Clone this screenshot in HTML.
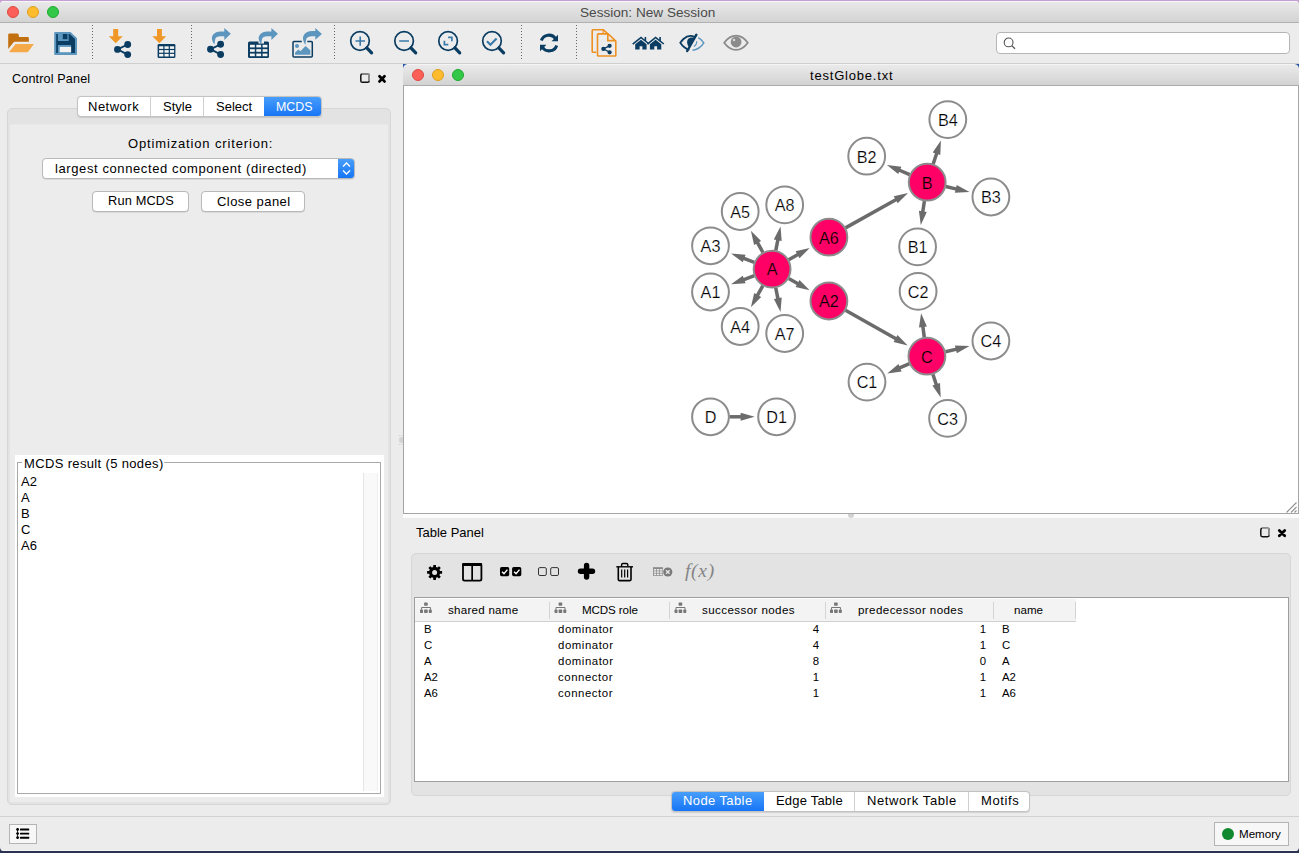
<!DOCTYPE html>
<html><head><meta charset="utf-8">
<style>
*{box-sizing:border-box;margin:0;padding:0}
html,body{width:1299px;height:853px;overflow:hidden;background:linear-gradient(#c59fd3 0,#c59fd3 20px,#2a3352 20px);font-family:"Liberation Sans",sans-serif;color:#000}
.a{position:absolute}
.t{position:absolute;white-space:pre;line-height:1}
#win{position:absolute;left:0;top:1px;width:1299px;height:850px;background:#ececec;border-radius:4px 4px 4px 4px;overflow:hidden}
#inner{position:absolute;left:0;top:-1px;width:1299px;height:853px}
#titlebar{left:0;top:0;width:1299px;height:23px;background:linear-gradient(#ebebeb,#d3d3d3);border-bottom:1px solid #b1b1b1}
.light{position:absolute;width:12px;height:12px;border-radius:50%}
.red{background:#fc5f57;border:0.5px solid #de4a41}
.yel{background:#fdbc2e;border:0.5px solid #de9f20}
.grn{background:#33c748;border:0.5px solid #1eaa2f}
.sep{position:absolute;top:25px;width:1px;height:35px;background-image:linear-gradient(#666 34%,transparent 34%);background-size:1px 3px}
.box{position:absolute;background:#e3e3e3;border:1px solid #d6d6d6;border-radius:5px}
.btn{position:absolute;background:#fff;border:1px solid #b9b9b9;border-radius:4px;box-shadow:0 0.5px 0.5px rgba(0,0,0,.15)}
.seg{position:absolute;top:0;height:100%;border-right:1px solid #d0d0d0}
.hdr{position:absolute;top:0;height:24px;border-right:1px solid #d6d6d6}
</style></head><body>
<div id="win"><div id="inner">
  <div id="titlebar" class="a"></div>
  <div class="a" style="left:0;top:1px;width:1299px;height:1px;background:#f6f6f6"></div>
  <div class="light red" style="left:7px;top:6px"></div>
  <div class="light yel" style="left:27px;top:6px"></div>
  <div class="light grn" style="left:47px;top:6px"></div>
  <div class="t" style="left:580px;top:6px;font-size:13.6px;color:#4a4a4a">Session: New Session</div>

  <!-- toolbar -->
  <div class="a" style="left:0;top:63px;width:1299px;height:1px;background:#cfcfcf"></div>
  <div class="sep" style="left:92px"></div>
  <div class="sep" style="left:191px"></div>
  <div class="sep" style="left:334px"></div>
  <div class="sep" style="left:521px"></div>
  <div class="sep" style="left:576px"></div>
  <div class="a" style="left:996px;top:32px;width:294px;height:22px;background:#fff;border:1px solid #b5b5b5;border-radius:4px"></div>
  <svg class="a" style="left:996px;top:32px" width="30" height="22"><circle cx="12.6" cy="10.4" r="4.4" fill="none" stroke="#555" stroke-width="1.1"/><path d="M15.8 13.6L19 16.8" stroke="#555" stroke-width="1.3"/></svg>

  <svg class="a" style="left:0;top:0" width="770" height="64" viewBox="0 0 770 64">
    <!-- folder -->
    <path d="M8.2 34.6Q8.2 33.4 9.4 33.4H17.2Q18.4 33.4 18.6 34.4L19 37.1H27.6Q28.9 37.1 28.9 38.4V41.8H15.2Q13.9 41.8 13 43L8.2 49Z" fill="#c2700f"/>
    <path d="M15.6 43.9H33.9L28.6 51.2Q27.9 52.2 26.6 52.2H10.2Q8.9 52.2 9.7 51.2Z" fill="#f5a948"/>
    <!-- save -->
    <path d="M54.2 32.9Q54.2 31.9 55.2 31.9H70.5L77 38.3V53.9Q77 54.9 76 54.9H55.2Q54.2 54.9 54.2 53.9Z" fill="#5c95be"/>
    <path d="M56.2 33.9H57.9V41.1H68.7V33.9H69.7L75 39.1V53H71.1V45.1H57.9V53H56.2Z" fill="#0b3d62"/>
    <rect x="62.8" y="34" width="4.6" height="5.2" fill="#0b3d62"/>
    <rect x="59.7" y="46.9" width="11.4" height="5.3" fill="#f2f2f2"/>
    <!-- import network -->
    <path d="M113.2 29.1H118.2V36.2H122.8L115.7 43.2L108.8 36.2H113.2Z" fill="#ef9827"/>
    <g fill="#0b3d62" stroke="#0b3d62" stroke-width="1.9"><circle cx="117.5" cy="49.4" r="2.5"/><circle cx="127.7" cy="44.5" r="2.5"/><circle cx="127.7" cy="54.6" r="2.5"/>
    <path d="M127.7 44.5L117.5 49.4L127.7 54.6" fill="none"/></g>
    <!-- import table -->
    <path d="M157 29.1H161.9V36.2H166.2L159.4 43.2L152.3 36.2H157Z" fill="#ef9827"/>
    <rect x="157.6" y="43.9" width="17.8" height="14.1" rx="1.3" fill="#0b3d62"/>
    <g fill="#f4f4f4">
      <rect x="159.1" y="46.3" width="4.2" height="2.6"/><rect x="164.5" y="46.3" width="4.2" height="2.6"/><rect x="169.9" y="46.3" width="4.2" height="2.6"/>
      <rect x="159.1" y="50.1" width="4.2" height="2.6"/><rect x="164.5" y="50.1" width="4.2" height="2.6"/><rect x="169.9" y="50.1" width="4.2" height="2.6"/>
      <rect x="159.1" y="53.9" width="4.2" height="2.6"/><rect x="164.5" y="53.9" width="4.2" height="2.6"/><rect x="169.9" y="53.9" width="4.2" height="2.6"/>
    </g>
    <!-- export network -->
    <path d="M214.5 44.6Q210 38.5 213.2 34.5Q215.8 31.4 220.5 31.4H224.3V28L230.8 33.7L224.3 40V36.3H220.5Q216 36.3 215.3 39Q214.7 41.5 214.5 44.6Z" fill="#5c95be"/>
    <g fill="#0b3d62" stroke="#0b3d62" stroke-width="1.9"><circle cx="210.5" cy="49.2" r="2.5"/><circle cx="220.6" cy="44.3" r="2.5"/><circle cx="220.6" cy="54.5" r="2.5"/>
    <path d="M220.6 44.3L210.5 49.2L220.6 54.5" fill="none"/></g>
    <!-- export table -->
    <rect x="248" y="41.5" width="21" height="16.4" rx="1.5" fill="#0b3d62"/>
    <g fill="#f4f4f4">
      <rect x="250" y="44.8" width="4.8" height="2.6"/><rect x="256.3" y="44.8" width="4.8" height="2.6"/><rect x="262.6" y="44.8" width="4.8" height="2.6"/>
      <rect x="250" y="49.2" width="4.8" height="2.6"/><rect x="256.3" y="49.2" width="4.8" height="2.6"/><rect x="262.6" y="49.2" width="4.8" height="2.6"/>
      <rect x="250" y="53.6" width="4.8" height="2.6"/><rect x="256.3" y="53.6" width="4.8" height="2.6"/><rect x="262.6" y="53.6" width="4.8" height="2.6"/>
    </g>
    <path d="M258.5 40.5H264V43.5H258.5Z" fill="#eeeeee"/>
    <path d="M261.3 44.6Q256.8 38.5 260 34.5Q262.6 31.4 267.3 31.4H271.4V28L277.9 33.7L271.4 40V36.3H267.3Q262.8 36.3 262.1 39Q261.5 41.5 261.3 44.6Z" fill="#5c95be"/>
    <!-- export image -->
    <path d="M301.8 41.6H294Q293 41.6 293 42.6V56.1Q293 57.1 294 57.1H311.3Q312.3 57.1 312.3 56.1V42.6Q312.3 41.6 311.3 41.6H307.3" fill="none" stroke="#0b3d62" stroke-width="1.5"/>
    <circle cx="297" cy="45.9" r="2" fill="#5c95be"/>
    <path d="M295.1 54.8V52.6L298.4 49.6L300.4 51.2L305.6 45.9L310.3 50.3V54.8Z" fill="#5c95be"/>
    <path d="M305.4 44.9Q301.2 38.8 304.2 34.6Q306.6 31 312 31H315.3V28L321.9 33.9L315.3 39.8V36.2H312Q307.5 36.2 306.4 38.8Q305.5 41.2 305.4 44.9Z" fill="#5c95be"/>
    <!-- zoom in -->
    <g fill="none" stroke="#0b3d62"><circle cx="360" cy="41" r="9.3" stroke-width="1.7"/><path d="M366.8 47.8L371.6 52.9" stroke-width="3.2" stroke-linecap="round"/></g>
    <path d="M355.5 41H365M360.2 36.5V45.7" stroke="#3a7aa8" stroke-width="1.6"/>
    <!-- zoom out -->
    <g fill="none" stroke="#0b3d62"><circle cx="404.1" cy="41" r="9.3" stroke-width="1.7"/><path d="M410.9 47.8L415.7 52.9" stroke-width="3.2" stroke-linecap="round"/></g>
    <path d="M399.2 41H409" stroke="#3a7aa8" stroke-width="1.6"/>
    <!-- zoom fit -->
    <g fill="none" stroke="#0b3d62"><circle cx="448.1" cy="41" r="9.3" stroke-width="1.7"/><path d="M454.9 47.8L459.7 52.9" stroke-width="3.2" stroke-linecap="round"/></g>
    <path d="M448.1 37.4H451.9V41.2M444.4 40.8V44.6H448.3" fill="none" stroke="#3a7aa8" stroke-width="1.7"/>
    <!-- zoom sel -->
    <g fill="none" stroke="#0b3d62"><circle cx="492" cy="41" r="9.3" stroke-width="1.7"/><path d="M498.8 47.8L503.6 52.9" stroke-width="3.2" stroke-linecap="round"/></g>
    <path d="M487 41.3L490.4 44.8L496.6 38.4" fill="none" stroke="#3a7aa8" stroke-width="2.1"/>
    <!-- refresh -->
    <path d="M541.3 40.6A8 8 0 0 1 555.6 38.8" fill="none" stroke="#0b3d62" stroke-width="3"/>
    <path d="M558 34.7V41.3H551.6Z" fill="#0b3d62"/>
    <path d="M556.7 45.4A8 8 0 0 1 542.4 47.2" fill="none" stroke="#0b3d62" stroke-width="3"/>
    <path d="M540 51.3V44.7H546.4Z" fill="#0b3d62"/>
    <!-- docs -->
    <path d="M596.2 52.2H592.9Q592.2 52.2 592.2 51.5V30.4Q592.2 29.7 592.9 29.7H603.4L607.6 33.6" fill="none" stroke="#ee9020" stroke-width="1.6"/>
    <path d="M603.2 29.8V33.5" fill="none" stroke="#ee9020" stroke-width="1.2"/>
    <path d="M598.3 33.9H608.1L615.8 41V55.2Q615.8 56 615 56H598.3Q597.5 56 597.5 55.2V34.7Q597.5 33.9 598.3 33.9Z M607.8 34.2V40.6H615.6" fill="none" stroke="#ee9020" stroke-width="1.6"/>
    <g fill="#0b3d62" stroke="#0b3d62" stroke-width="1.3"><circle cx="603.4" cy="48.9" r="1.5"/><circle cx="609.6" cy="45.8" r="1.5"/><circle cx="609.6" cy="52.3" r="1.5"/><path d="M609.6 45.8L603.4 48.9L609.6 52.3" fill="none"/></g>
    <!-- houses -->
    <g fill="#0b3d62">
      <path d="M632.2 43.6L641 36.6L644.6 39.4V37H646.2V40.7L649.6 43.4L648.6 44.5L641 38.5L633.2 44.7Z"/>
      <path d="M635.2 44.3L641 39.7L646.6 44.3V49.6H642.4V46.3H639.6V49.6H635.2Z"/>
      <path d="M646.9 43.6L655.6 36.6L659.3 39.4V37H660.9V40.7L664.3 43.4L663.3 44.5L655.6 38.5L647.9 44.7Z"/>
      <path d="M649.9 44.3L655.6 39.7L661.3 44.3V49.6H657.1V46.3H654.3V49.6H649.9Z"/>
    </g>
    <!-- hide eye -->
    <path d="M694.5 36.8Q688.5 34.3 683.5 39Q681.8 40.7 680.3 42.8Q684 48.5 689.3 49.8" fill="none" stroke="#0b3d62" stroke-width="1.8"/>
    <path d="M690.5 37.6Q687 38.8 687.1 42.6Q687.3 45.2 688.8 46.7L694.2 37.8Q692.4 37.3 690.5 37.6Z" fill="#0b3d62"/>
    <path d="M696.4 34.7L687.2 51" stroke="#0b3d62" stroke-width="2.4" stroke-linecap="round"/>
    <path d="M698.3 37.6Q701.8 39.6 703.8 42.8Q699.6 49.5 692.5 50.2" fill="none" stroke="#5c95be" stroke-width="1.5"/>
    <path d="M696.6 41.2Q697 44.6 693.8 46.4" fill="none" stroke="#5c95be" stroke-width="1.2"/>
    <!-- show eye -->
    <path d="M724.2 42.7Q729.5 35.6 736 35.6Q742.6 35.6 747.8 42.7Q742.6 49.9 736 49.9Q729.5 49.9 724.2 42.7Z" fill="none" stroke="#8b8b8b" stroke-width="1.8"/>
    <circle cx="736.1" cy="42" r="5.4" fill="#8b8b8b"/>
    <circle cx="734" cy="40" r="1.3" fill="#d8d8d8"/>
    <!-- search glass -->
    <circle cx="1008.6" cy="42.4" r="4.4" fill="none" stroke="#555" stroke-width="1.1"/>
  </svg>

  <!-- control panel -->

  <svg class="a" style="left:355px;top:68px" width="40" height="20"><rect x="5.8" y="5.9" width="8.4" height="8.4" rx="1.6" fill="none" stroke="#111" stroke-width="1.5"/><path d="M7 5.9H12.6Q14.2 5.9 14.2 7.5V13" fill="none" stroke="#999" stroke-width="1.5"/><path d="M24.5 8.2L29.5 13.4M29.5 8.2L24.5 13.4" stroke="#000" stroke-width="2.8" stroke-linecap="round"/></svg>
  <svg class="a" style="left:1255px;top:522px" width="40" height="20"><rect x="5.8" y="6.3" width="8.4" height="8.4" rx="1.6" fill="none" stroke="#111" stroke-width="1.5"/><path d="M7 6.3H12.6Q14.2 6.3 14.2 7.9V13.4" fill="none" stroke="#999" stroke-width="1.5"/><path d="M24.3 8.5L29.7 13.7M29.7 8.5L24.3 13.7" stroke="#000" stroke-width="2.8" stroke-linecap="round"/></svg>
  <div class="t" style="left:12px;top:73px;font-size:12.6px;letter-spacing:0.15px">Control Panel</div>
  <div class="box" style="left:7px;top:108px;width:384px;height:697px"></div>
  <div class="a" style="left:10px;top:124px;width:378px;height:678px;background:#ececec;border-top:1px solid #e8e8e8"></div>

  <!-- tabs -->
  <div class="a" style="left:77px;top:96px;width:245px;height:21px;background:#fff;border:1px solid #c3c3c3;border-radius:4px;box-shadow:0 0.5px 1px rgba(0,0,0,.12);overflow:hidden">
    <div class="seg" style="left:0;width:73px"></div>
    <div class="seg" style="left:73px;width:53px"></div>
    <div class="seg" style="left:126px;width:60px;border-right:none"></div>
    <div class="a" style="left:186px;top:-1px;width:59px;height:21px;background:linear-gradient(#4aa0fb,#1473f5)"></div>
  </div>
  <div class="t" style="left:88px;top:100px;font-size:13px;letter-spacing:0.5px">Network</div>
  <div class="t" style="left:163px;top:100px;font-size:13px">Style</div>
  <div class="t" style="left:216px;top:100px;font-size:13px">Select</div>
  <div class="t" style="left:276px;top:101px;font-size:12.4px;color:#fff">MCDS</div>

  <div class="t" style="left:128px;top:137px;font-size:13px;letter-spacing:0.85px">Optimization criterion:</div>
  <div class="btn" style="left:42px;top:158px;width:313px;height:21px;overflow:hidden">
    <div class="a" style="left:295px;top:-1px;width:17px;height:21px;background:linear-gradient(#4aa0fb,#1473f5)"></div>
  </div>
  <svg class="a" style="left:338px;top:158px" width="17" height="21"><path d="M5 8.5L8.5 5L12 8.5M5 12.5L8.5 16L12 12.5" fill="none" stroke="#fff" stroke-width="1.3"/></svg>
  <div class="t" style="left:55px;top:162px;font-size:13px;letter-spacing:0.6px">largest connected component (directed)</div>
  <div class="btn" style="left:92px;top:191px;width:97px;height:21px"></div>
  <div class="t" style="left:108px;top:195px;font-size:12.8px;letter-spacing:0.15px">Run MCDS</div>
  <div class="btn" style="left:201px;top:191px;width:104px;height:21px"></div>
  <div class="t" style="left:217px;top:195px;font-size:13px;letter-spacing:0.45px">Close panel</div>

  <!-- group box -->
  <div class="a" style="left:15px;top:455px;width:369px;height:342px;background:#fff"></div>
  <div class="a" style="left:17px;top:462px;width:364px;height:332px;border:1px solid #a9a9a9"></div>
  <div class="a" style="left:22px;top:455px;width:142px;height:14px;background:#fff"></div>
  <div class="t" style="left:24px;top:457px;font-size:13px;letter-spacing:0.35px">MCDS result (5 nodes)</div>
  <div class="a" style="left:363px;top:473px;width:15px;height:318px;background:#f9f9f9;border-left:1px solid #e6e6e6;border-right:1px solid #f0f0f0"></div>
  <div class="t" style="left:21px;top:474px;font-size:13px;line-height:16px">A2
A
B
C
A6</div>
  <div class="a" style="left:7px;top:0;width:1px;height:0"></div>

  <!-- network window -->
  <div class="a" style="left:403px;top:514px;width:896px;height:4px;background:#fcfcfc"></div>
  <div class="a" style="left:848px;top:514px;width:6px;height:4px;border-radius:0 0 3px 3px;background:#d2d2d2"></div>
  <div class="a" style="left:399px;top:437px;width:4px;height:6px;border-radius:3px 0 0 3px;background:#d2d2d2"></div>
  <div class="a" style="left:398px;top:435px;width:5px;height:1px;background:#ddd"></div>
  <div class="a" style="left:398px;top:444px;width:5px;height:1px;background:#ddd"></div>
  <div class="a" style="left:403px;top:64px;width:896px;height:450px;background:#fff;border:1px solid #a5a5a5;border-top:none"></div>
  <div class="a" style="left:403px;top:64px;width:896px;height:22px;background:linear-gradient(#ebebeb,#d3d3d3);border-bottom:1px solid #acacac;border-radius:4px 4px 0 0"></div>
  <div class="a" style="left:405px;top:64px;width:892px;height:1px;background:#f4f4f4"></div>
  <svg class="a" style="left:403px;top:64px" width="5" height="5"><path d="M0 0H4.5Q0.5 0.5 0 4.5Z" fill="#2856a8"/></svg>
  <svg class="a" style="left:1294px;top:64px" width="5" height="5"><path d="M5 0H0.5Q4.5 0.5 5 4.5Z" fill="#2856a8"/></svg>
  <div class="light red" style="left:412px;top:69px"></div>
  <div class="light yel" style="left:432px;top:69px"></div>
  <div class="light grn" style="left:452px;top:69px"></div>
  <div class="t" style="left:810px;top:69px;font-size:13px;letter-spacing:0.8px">testGlobe.txt</div>
<!--GRAPH START-->
<svg class="a" style="left:404px;top:86px" width="894" height="428" viewBox="404 86 894 428">
<line x1="762.9" y1="252.5" x2="757.2" y2="242.1" stroke="#6b6b6b" stroke-width="3.5"/>
<path d="M750.9 230.7L761.1 241.1L754.1 244.9Z" fill="#6b6b6b"/>
<line x1="775.8" y1="250.5" x2="778.0" y2="239.2" stroke="#6b6b6b" stroke-width="3.5"/>
<path d="M780.5 226.5L781.7 241.0L773.8 239.5Z" fill="#6b6b6b"/>
<line x1="754.3" y1="262.4" x2="743.2" y2="258.2" stroke="#6b6b6b" stroke-width="3.5"/>
<path d="M731.1 253.6L745.6 254.8L742.8 262.3Z" fill="#6b6b6b"/>
<line x1="754.3" y1="275.7" x2="743.3" y2="279.8" stroke="#6b6b6b" stroke-width="3.5"/>
<path d="M731.1 284.3L742.8 275.7L745.6 283.2Z" fill="#6b6b6b"/>
<line x1="762.9" y1="285.7" x2="757.2" y2="295.9" stroke="#6b6b6b" stroke-width="3.5"/>
<path d="M750.9 307.3L754.2 293.1L761.2 297.0Z" fill="#6b6b6b"/>
<line x1="775.7" y1="287.7" x2="778.0" y2="299.2" stroke="#6b6b6b" stroke-width="3.5"/>
<path d="M780.5 311.9L773.9 298.9L781.7 297.4Z" fill="#6b6b6b"/>
<line x1="788.7" y1="259.8" x2="798.4" y2="254.3" stroke="#6b6b6b" stroke-width="3.5"/>
<path d="M809.7 248.0L799.5 258.3L795.6 251.3Z" fill="#6b6b6b"/>
<line x1="788.7" y1="278.4" x2="798.4" y2="283.9" stroke="#6b6b6b" stroke-width="3.5"/>
<path d="M809.7 290.2L795.6 286.9L799.5 279.9Z" fill="#6b6b6b"/>
<line x1="845.5" y1="227.9" x2="896.7" y2="199.3" stroke="#6b6b6b" stroke-width="3.5"/>
<path d="M908.0 192.9L897.7 203.3L893.8 196.3Z" fill="#6b6b6b"/>
<line x1="845.5" y1="310.3" x2="896.4" y2="339.0" stroke="#6b6b6b" stroke-width="3.5"/>
<path d="M907.7 345.4L893.6 342.0L897.5 335.0Z" fill="#6b6b6b"/>
<line x1="933.1" y1="164.2" x2="936.9" y2="152.8" stroke="#6b6b6b" stroke-width="3.5"/>
<path d="M940.9 140.5L940.3 155.0L932.7 152.5Z" fill="#6b6b6b"/>
<line x1="909.7" y1="174.7" x2="898.9" y2="170.0" stroke="#6b6b6b" stroke-width="3.5"/>
<path d="M886.9 164.9L901.4 166.7L898.2 174.1Z" fill="#6b6b6b"/>
<line x1="945.7" y1="186.5" x2="956.8" y2="189.1" stroke="#6b6b6b" stroke-width="3.5"/>
<path d="M969.5 192.0L954.9 192.7L956.7 185.0Z" fill="#6b6b6b"/>
<line x1="924.4" y1="201.0" x2="922.7" y2="212.3" stroke="#6b6b6b" stroke-width="3.5"/>
<path d="M920.8 225.1L918.9 210.7L926.8 211.9Z" fill="#6b6b6b"/>
<line x1="924.3" y1="337.4" x2="922.8" y2="326.1" stroke="#6b6b6b" stroke-width="3.5"/>
<path d="M921.1 313.2L926.9 326.5L919.0 327.6Z" fill="#6b6b6b"/>
<line x1="945.4" y1="351.8" x2="956.8" y2="349.1" stroke="#6b6b6b" stroke-width="3.5"/>
<path d="M969.5 346.1L956.8 353.2L954.9 345.4Z" fill="#6b6b6b"/>
<line x1="909.5" y1="363.7" x2="899.1" y2="368.2" stroke="#6b6b6b" stroke-width="3.5"/>
<path d="M887.2 373.4L898.5 364.1L901.6 371.5Z" fill="#6b6b6b"/>
<line x1="932.9" y1="374.2" x2="936.5" y2="385.2" stroke="#6b6b6b" stroke-width="3.5"/>
<path d="M940.7 397.5L932.4 385.5L940.0 383.0Z" fill="#6b6b6b"/>
<line x1="729.5" y1="416.8" x2="741.6" y2="416.8" stroke="#6b6b6b" stroke-width="3.5"/>
<path d="M754.6 416.8L740.6 420.8L740.6 412.8Z" fill="#6b6b6b"/>
<circle cx="772.1" cy="269.1" r="18.4" fill="#ff0066" stroke="#8c8c8c" stroke-width="2.0"/>
<circle cx="740.2" cy="211.5" r="18.4" fill="#fff" stroke="#8c8c8c" stroke-width="2.0"/>
<circle cx="784.7" cy="204.9" r="18.4" fill="#fff" stroke="#8c8c8c" stroke-width="2.0"/>
<circle cx="710.5" cy="245.8" r="18.4" fill="#fff" stroke="#8c8c8c" stroke-width="2.0"/>
<circle cx="710.5" cy="292" r="18.4" fill="#fff" stroke="#8c8c8c" stroke-width="2.0"/>
<circle cx="740.2" cy="326.5" r="18.4" fill="#fff" stroke="#8c8c8c" stroke-width="2.0"/>
<circle cx="784.7" cy="333.5" r="18.4" fill="#fff" stroke="#8c8c8c" stroke-width="2.0"/>
<circle cx="828.9" cy="237.2" r="18.4" fill="#ff0066" stroke="#8c8c8c" stroke-width="2.0"/>
<circle cx="828.9" cy="301" r="18.4" fill="#ff0066" stroke="#8c8c8c" stroke-width="2.0"/>
<circle cx="927.2" cy="182.2" r="18.4" fill="#ff0066" stroke="#8c8c8c" stroke-width="2.0"/>
<circle cx="947.8" cy="119.6" r="18.4" fill="#fff" stroke="#8c8c8c" stroke-width="2.0"/>
<circle cx="866.7" cy="156.2" r="18.4" fill="#fff" stroke="#8c8c8c" stroke-width="2.0"/>
<circle cx="990.9" cy="197" r="18.4" fill="#fff" stroke="#8c8c8c" stroke-width="2.0"/>
<circle cx="917.6" cy="246.9" r="18.4" fill="#fff" stroke="#8c8c8c" stroke-width="2.0"/>
<circle cx="926.9" cy="356.2" r="18.4" fill="#ff0066" stroke="#8c8c8c" stroke-width="2.0"/>
<circle cx="918.1" cy="291.4" r="18.4" fill="#fff" stroke="#8c8c8c" stroke-width="2.0"/>
<circle cx="990.9" cy="341" r="18.4" fill="#fff" stroke="#8c8c8c" stroke-width="2.0"/>
<circle cx="867" cy="382.1" r="18.4" fill="#fff" stroke="#8c8c8c" stroke-width="2.0"/>
<circle cx="947.6" cy="418.4" r="18.4" fill="#fff" stroke="#8c8c8c" stroke-width="2.0"/>
<circle cx="710.5" cy="416.8" r="18.4" fill="#fff" stroke="#8c8c8c" stroke-width="2.0"/>
<circle cx="776.6" cy="416.8" r="18.4" fill="#fff" stroke="#8c8c8c" stroke-width="2.0"/>
<text x="772.1" y="275.4" text-anchor="middle" font-size="16.2" font-family="Liberation Sans" fill="#000" stroke="#ff0066" stroke-width="0.2">A</text>
<text x="740.2" y="217.8" text-anchor="middle" font-size="16.2" font-family="Liberation Sans" fill="#000" stroke="#fff" stroke-width="0.2">A5</text>
<text x="784.7" y="211.2" text-anchor="middle" font-size="16.2" font-family="Liberation Sans" fill="#000" stroke="#fff" stroke-width="0.2">A8</text>
<text x="710.5" y="252.1" text-anchor="middle" font-size="16.2" font-family="Liberation Sans" fill="#000" stroke="#fff" stroke-width="0.2">A3</text>
<text x="710.5" y="298.3" text-anchor="middle" font-size="16.2" font-family="Liberation Sans" fill="#000" stroke="#fff" stroke-width="0.2">A1</text>
<text x="740.2" y="332.8" text-anchor="middle" font-size="16.2" font-family="Liberation Sans" fill="#000" stroke="#fff" stroke-width="0.2">A4</text>
<text x="784.7" y="339.8" text-anchor="middle" font-size="16.2" font-family="Liberation Sans" fill="#000" stroke="#fff" stroke-width="0.2">A7</text>
<text x="828.9" y="243.5" text-anchor="middle" font-size="16.2" font-family="Liberation Sans" fill="#000" stroke="#ff0066" stroke-width="0.2">A6</text>
<text x="828.9" y="307.3" text-anchor="middle" font-size="16.2" font-family="Liberation Sans" fill="#000" stroke="#ff0066" stroke-width="0.2">A2</text>
<text x="927.2" y="188.5" text-anchor="middle" font-size="16.2" font-family="Liberation Sans" fill="#000" stroke="#ff0066" stroke-width="0.2">B</text>
<text x="947.8" y="125.9" text-anchor="middle" font-size="16.2" font-family="Liberation Sans" fill="#000" stroke="#fff" stroke-width="0.2">B4</text>
<text x="866.7" y="162.5" text-anchor="middle" font-size="16.2" font-family="Liberation Sans" fill="#000" stroke="#fff" stroke-width="0.2">B2</text>
<text x="990.9" y="203.3" text-anchor="middle" font-size="16.2" font-family="Liberation Sans" fill="#000" stroke="#fff" stroke-width="0.2">B3</text>
<text x="917.6" y="253.2" text-anchor="middle" font-size="16.2" font-family="Liberation Sans" fill="#000" stroke="#fff" stroke-width="0.2">B1</text>
<text x="926.9" y="362.5" text-anchor="middle" font-size="16.2" font-family="Liberation Sans" fill="#000" stroke="#ff0066" stroke-width="0.2">C</text>
<text x="918.1" y="297.7" text-anchor="middle" font-size="16.2" font-family="Liberation Sans" fill="#000" stroke="#fff" stroke-width="0.2">C2</text>
<text x="990.9" y="347.3" text-anchor="middle" font-size="16.2" font-family="Liberation Sans" fill="#000" stroke="#fff" stroke-width="0.2">C4</text>
<text x="867" y="388.4" text-anchor="middle" font-size="16.2" font-family="Liberation Sans" fill="#000" stroke="#fff" stroke-width="0.2">C1</text>
<text x="947.6" y="424.7" text-anchor="middle" font-size="16.2" font-family="Liberation Sans" fill="#000" stroke="#fff" stroke-width="0.2">C3</text>
<text x="710.5" y="423.1" text-anchor="middle" font-size="16.2" font-family="Liberation Sans" fill="#000" stroke="#fff" stroke-width="0.2">D</text>
<text x="776.6" y="423.1" text-anchor="middle" font-size="16.2" font-family="Liberation Sans" fill="#000" stroke="#fff" stroke-width="0.2">D1</text>
</svg>
<!--GRAPH END-->

  <!-- table panel -->
  <div class="t" style="left:416px;top:526px;font-size:13px">Table Panel</div>
  <div class="box" style="left:411px;top:553px;width:880px;height:243px"></div>
  <div class="a" style="left:414px;top:597px;width:875px;height:185px;background:#fff;border:1px solid #9e9e9e"></div>



  <svg class="a" style="left:0;top:0" width="730" height="600">
    <path d="M440.01 570.96 L442.09 571.11 L442.09 573.69 L440.01 573.84 L439.44 575.21 L440.81 576.79 L438.99 578.61 L437.41 577.24 L436.04 577.81 L435.89 579.89 L433.31 579.89 L433.16 577.81 L431.79 577.24 L430.21 578.61 L428.39 576.79 L429.76 575.21 L429.19 573.84 L427.11 573.69 L427.11 571.11 L429.19 570.96 L429.76 569.59 L428.39 568.01 L430.21 566.19 L431.79 567.56 L433.16 566.99 L433.31 564.91 L435.89 564.91 L436.04 566.99 L437.41 567.56 L438.99 566.19 L440.81 568.01 L439.44 569.59Z M437.10 572.40A2.5 2.5 0 1 0 432.10 572.40A2.5 2.5 0 1 0 437.10 572.40Z" fill="#000" fill-rule="evenodd"/>
    <rect x="463" y="563.8" width="18.4" height="16.8" rx="1.6" fill="none" stroke="#000" stroke-width="1.8"/>
    <rect x="462.1" y="562.9" width="20" height="3.2" rx="1" fill="#000"/>
    <rect x="471.3" y="563" width="1.7" height="18" fill="#000"/>
    <rect x="500" y="567.1" width="9.2" height="9.1" rx="1.6" fill="#000"/>
    <rect x="512.1" y="567.1" width="9.2" height="9.1" rx="1.6" fill="#000"/>
    <path d="M502 571.7L504 573.8L507.4 569.6M514.1 571.7L516.1 573.8L519.5 569.6" fill="none" stroke="#fff" stroke-width="1.4"/>
    <rect x="538.5" y="567.6" width="7.8" height="7.9" rx="1.4" fill="none" stroke="#333" stroke-width="1"/>
    <rect x="550.7" y="567.6" width="7.8" height="7.9" rx="1.4" fill="none" stroke="#333" stroke-width="1"/>
    <path d="M586.6 565.4V577.1M580.5 571.3H592.5" stroke="#000" stroke-width="5.4" stroke-linecap="round"/>
    <path d="M616.3 566.8H633" stroke="#000" stroke-width="1.4"/>
    <path d="M621.6 566.5V564.8Q621.6 563.5 622.9 563.5H626.5Q627.8 563.5 627.8 564.8V566.5" fill="none" stroke="#000" stroke-width="1.4"/>
    <path d="M618.3 567V579.6Q618.3 580.6 619.3 580.6H630Q631 580.6 631 579.6V567" fill="none" stroke="#000" stroke-width="1.6"/>
    <path d="M621.7 569.5V577.6M624.7 569.5V577.6M627.6 569.5V577.6" stroke="#000" stroke-width="1.2"/>
    <rect x="653" y="567.2" width="9.9" height="8.7" fill="#888"/>
    <g fill="#e8e8e8"><rect x="653.8" y="569" width="2.4" height="1.6"/><rect x="656.9" y="569" width="2.4" height="1.6"/><rect x="660" y="569" width="2.4" height="1.6"/>
    <rect x="653.8" y="571.3" width="2.4" height="1.6"/><rect x="656.9" y="571.3" width="2.4" height="1.6"/><rect x="660" y="571.3" width="2.4" height="1.6"/>
    <rect x="653.8" y="573.6" width="2.4" height="1.6"/><rect x="656.9" y="573.6" width="2.4" height="1.6"/><rect x="660" y="573.6" width="2.4" height="1.6"/></g>
    <circle cx="667.8" cy="572" r="4.6" fill="#7a7a7a"/>
    <path d="M666 570.2L669.6 573.8M669.6 570.2L666 573.8" stroke="#e8e8e8" stroke-width="1.3"/>
  </svg>
  <div class="t" style="left:685px;top:561px;font-family:'Liberation Serif',serif;font-style:italic;font-size:19.5px;color:#858585;letter-spacing:0.7px">f(x)</div>
  <!-- table -->
  <div class="a" style="left:415px;top:599px;width:661px;height:23px;background:#f3f3f3;border-bottom:1px solid #d0d0d0"></div>
  <div class="a" style="left:549px;top:602px;width:1px;height:17px;background:#d4d4d4"></div>
  <div class="a" style="left:669px;top:602px;width:1px;height:17px;background:#d4d4d4"></div>
  <div class="a" style="left:825px;top:602px;width:1px;height:17px;background:#d4d4d4"></div>
  <div class="a" style="left:993px;top:602px;width:1px;height:17px;background:#d4d4d4"></div>
  <div class="a" style="left:1075px;top:602px;width:1px;height:17px;background:#d4d4d4"></div>
<svg class="a" style="left:0;top:600px" width="900" height="16"><g fill="#777"><g transform="translate(420 0)"><rect x="4.1" y="2.6" width="3.6" height="3.1" rx="0.6"/><path d="M1.5 9.6V7.5H10.5V9.6" fill="none" stroke="#777" stroke-width="1"/><rect x="0" y="9.4" width="3" height="3.5" rx="0.6"/><rect x="4.1" y="9.4" width="3.6" height="3.5" rx="0.6"/><rect x="8.8" y="9.4" width="3" height="3.5" rx="0.6"/></g><g transform="translate(554.5 0)"><rect x="4.1" y="2.6" width="3.6" height="3.1" rx="0.6"/><path d="M1.5 9.6V7.5H10.5V9.6" fill="none" stroke="#777" stroke-width="1"/><rect x="0" y="9.4" width="3" height="3.5" rx="0.6"/><rect x="4.1" y="9.4" width="3.6" height="3.5" rx="0.6"/><rect x="8.8" y="9.4" width="3" height="3.5" rx="0.6"/></g><g transform="translate(674.5 0)"><rect x="4.1" y="2.6" width="3.6" height="3.1" rx="0.6"/><path d="M1.5 9.6V7.5H10.5V9.6" fill="none" stroke="#777" stroke-width="1"/><rect x="0" y="9.4" width="3" height="3.5" rx="0.6"/><rect x="4.1" y="9.4" width="3.6" height="3.5" rx="0.6"/><rect x="8.8" y="9.4" width="3" height="3.5" rx="0.6"/></g><g transform="translate(830 0)"><rect x="4.1" y="2.6" width="3.6" height="3.1" rx="0.6"/><path d="M1.5 9.6V7.5H10.5V9.6" fill="none" stroke="#777" stroke-width="1"/><rect x="0" y="9.4" width="3" height="3.5" rx="0.6"/><rect x="4.1" y="9.4" width="3.6" height="3.5" rx="0.6"/><rect x="8.8" y="9.4" width="3" height="3.5" rx="0.6"/></g></g></svg>
  <div class="t" style="left:448px;top:604px;font-size:11.6px;letter-spacing:0.25px">shared name</div>
  <div class="t" style="left:582px;top:604px;font-size:11.6px;letter-spacing:-0.1px">MCDS role</div>
  <div class="t" style="left:702px;top:604px;font-size:11.6px;letter-spacing:0.4px">successor nodes</div>
  <div class="t" style="left:858px;top:604px;font-size:11.6px;letter-spacing:0.4px">predecessor nodes</div>
  <div class="t" style="left:1014px;top:604px;font-size:11.6px">name</div>
  <div class="t" style="left:424px;top:621px;font-size:11.4px;line-height:16px">B
C
A
A2
A6</div>
  <div class="t" style="left:558px;top:621px;font-size:11.4px;line-height:16px;letter-spacing:0.55px">dominator
dominator
dominator
connector
connector</div>
  <div class="t" style="left:812px;top:621px;font-size:11.4px;line-height:16px;text-align:right;width:7px">4
4
8
1
1</div>
  <div class="t" style="left:979px;top:621px;font-size:11.4px;line-height:16px;text-align:right;width:7px">1
1
0
1
1</div>
  <div class="t" style="left:1002px;top:621px;font-size:11.4px;line-height:16px">B
C
A
A2
A6</div>

  <!-- bottom tabs -->
  <div class="a" style="left:671px;top:791px;width:359px;height:21px;background:#fff;border:1px solid #c3c3c3;border-radius:4px;box-shadow:0 0.5px 1px rgba(0,0,0,.12);overflow:hidden">
    <div class="a" style="left:-1px;top:-1px;width:93px;height:21px;background:linear-gradient(#4aa0fb,#1473f5)"></div>
    <div class="seg" style="left:92px;width:91px"></div>
    <div class="seg" style="left:183px;width:114px"></div>
  </div>
  <div class="t" style="left:683px;top:794px;font-size:13px;color:#fff;letter-spacing:0.4px">Node Table</div>
  <div class="t" style="left:776px;top:794px;font-size:13px;letter-spacing:0.2px">Edge Table</div>
  <div class="t" style="left:867px;top:794px;font-size:13px;letter-spacing:0.6px">Network Table</div>
  <div class="t" style="left:981px;top:794px;font-size:13px;letter-spacing:0.6px">Motifs</div>

  <!-- status -->
  <div class="a" style="left:9px;top:824px;width:28px;height:20px;background:#f7f7f7;border:1px solid #b4b4b4"></div>
  <div class="a" style="left:1214px;top:822px;width:75px;height:24px;background:#f7f7f7;border:1px solid #b4b4b4"></div>
  <div class="a" style="left:1222px;top:828px;width:12px;height:12px;border-radius:50%;background:#11892f"></div>
  <div class="t" style="left:1239px;top:828px;font-size:11.6px">Memory</div>

  <svg class="a" style="left:9px;top:824px" width="28" height="20"><g fill="#000"><circle cx="8.6" cy="5.5" r="1.4"/><circle cx="8.6" cy="9.6" r="1.4"/><circle cx="8.6" cy="13.7" r="1.4"/><rect x="11" y="4.6" width="9.2" height="1.9" rx="0.5"/><rect x="11" y="8.7" width="9.2" height="1.9" rx="0.5"/><rect x="11" y="12.8" width="9.2" height="1.9" rx="0.5"/><rect x="8.2" y="5.5" width="0.8" height="8"/></g></svg>
  <svg class="a" style="left:1284px;top:500px" width="14" height="14"><path d="M2.5 12.5L12.5 2.5M7 12.5L12.5 7M10.5 12.5L12.5 10.5" stroke="#8e8e8e" stroke-width="1.1"/></svg>
  <!-- status bar -->
  <div class="a" style="left:0;top:816px;width:1299px;height:1px;background:#d2d2d2"></div>
  <div class="a" style="left:0;top:850px;width:1299px;height:1px;background:#f4f4f4"></div>
</div></div>
</body></html>
